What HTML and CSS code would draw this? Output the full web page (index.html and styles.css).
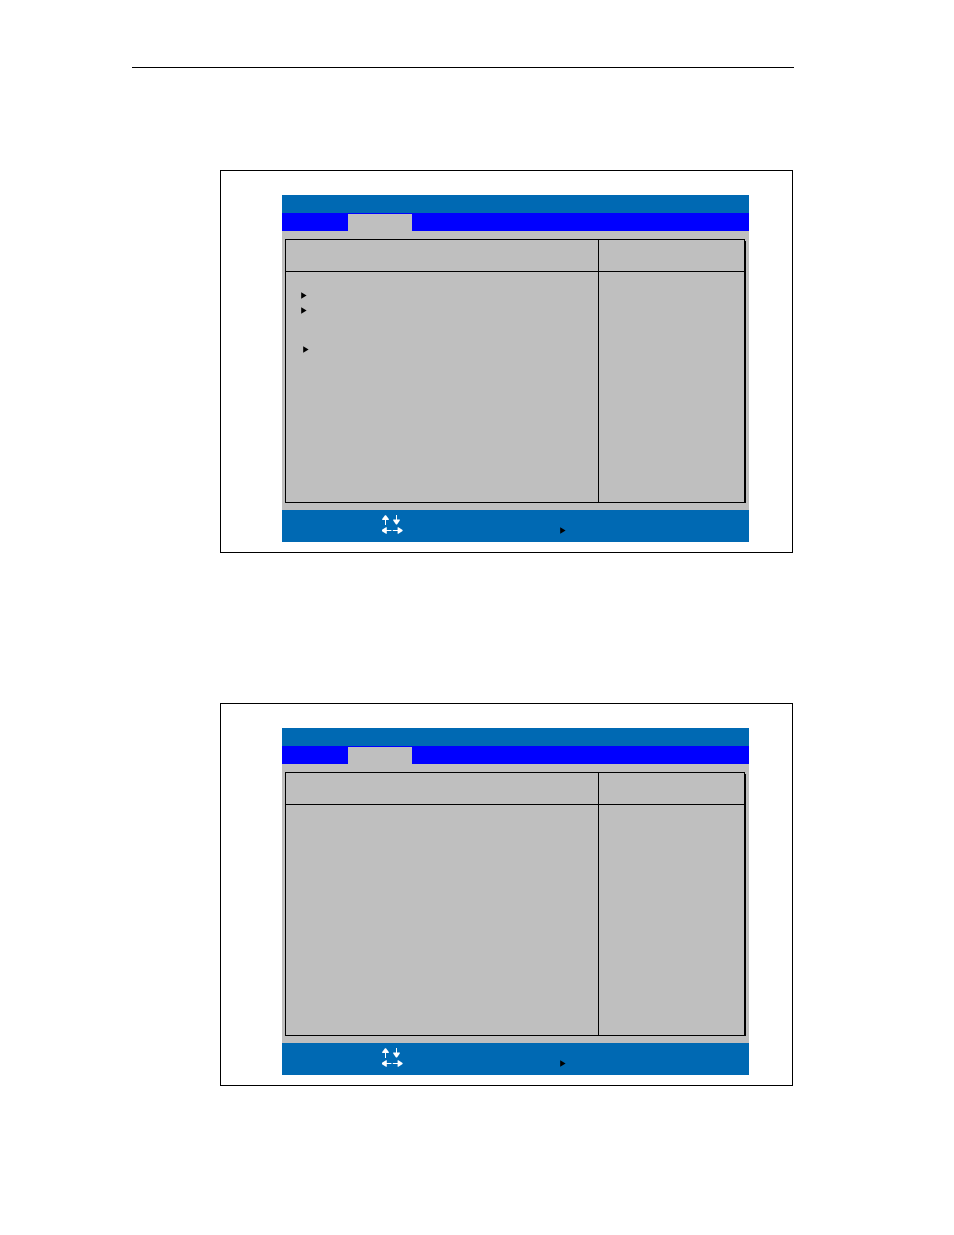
FILE: index.html
```html
<!DOCTYPE html>
<html lang="en">
<head>
<meta charset="utf-8">
<title>Setup screens</title>
<link rel="stylesheet" href="styles.css">
</head>
<body>
<svg width="0" height="0" class="symbols" aria-hidden="true">
  <symbol id="marker" viewBox="0 0 6 7"><path d="M0.2 0.2 L5.6 3.5 L0.2 6.8Z" fill="#000"/></symbol>
  <symbol id="keys" viewBox="0 0 21 19">
    <g fill="#fff">
      <path d="M3 5H0.2V4L3 0.3H4L6.8 4V5H4V10H3Z"/>
      <path d="M14 0H15V4.5H17.8V5.5L15 9.6H14L11.2 5.5V4.5H14Z"/>
      <path d="M-0.2 15L4 12.2H4.8V15H9.4V16H4.8V18.8H4L-0.2 16Z"/>
      <path d="M10.8 15H15.6V12.2H16.4L20.6 15V16L16.4 18.8H15.6V16H10.8Z"/>
    </g>
  </symbol>
</svg>
<main class="page">
  <hr class="rule">
  <figure class="figure">
    <div class="screen">
      <div class="title-bar"></div>
      <div class="menu-bar"><div class="tab"></div></div>
      <div class="screen-body">
        <div class="panel">
          <div class="cell head divided"></div>
          <div class="cell head"></div>
          <div class="cell divided options">
            <svg class="marker"><use href="#marker"/></svg>
            <svg class="marker"><use href="#marker"/></svg>
            <div class="group"><svg class="marker"><use href="#marker"/></svg></div>
          </div>
          <div class="cell"></div>
        </div>
      </div>
      <div class="key-bar">
        <svg class="keys"><use href="#keys"/></svg>
        <svg class="marker"><use href="#marker"/></svg>
      </div>
    </div>
  </figure>
  <figure class="figure">
    <div class="screen">
      <div class="title-bar"></div>
      <div class="menu-bar"><div class="tab"></div></div>
      <div class="screen-body">
        <div class="panel">
          <div class="cell head divided"></div>
          <div class="cell head"></div>
          <div class="cell divided options"></div>
          <div class="cell"></div>
        </div>
      </div>
      <div class="key-bar">
        <svg class="keys"><use href="#keys"/></svg>
        <svg class="marker"><use href="#marker"/></svg>
      </div>
    </div>
  </figure>
</main>
</body>
</html>
```
FILE: styles.css
```css
* { box-sizing: border-box; }

body {
  margin: 0;
  background: #fff;
  font-family: "Liberation Sans", Arial, sans-serif;
}

.symbols { position: absolute; }

.page { padding: 67px 160px 149px 132px; }

.rule {
  height: 1px;
  margin: 0 0 102px;
  border: 0;
  background: #000;
}

.figure {
  margin: 0 1px 150px 88px;
  padding: 24px 43px 10px 61px;
  border: 1px solid #000;
}

.figure:last-child { margin-bottom: 0; }

.screen { background: #bfbfbf; }

.title-bar {
  height: 18px;
  background: #0069b3;
}

.menu-bar {
  display: flex;
  height: 18px;
  padding: 1px 0 0 66px;
  background: #00f;
}

.tab {
  width: 64px;
  background: #bfbfbf;
}

.screen-body { padding: 8px 4px 7px 3px; }

.panel {
  display: grid;
  grid-template-columns: 313fr 145fr;
  grid-template-rows: 32px auto;
  border: 1px solid #000;
  box-shadow: 1px 1px 0 -1px #000, 2px 1px 0 -1px #000;
}

.head { border-bottom: 1px solid #000; }

.divided { border-right: 1px solid #000; }

.options {
  display: flex;
  flex-direction: column;
  gap: 8px;
  min-height: 230px;
  padding: 20px 15px;
}

.marker {
  display: block;
  width: 6px;
  height: 7px;
}

.group { padding: 24px 0 0 2px; }

.key-bar {
  display: flex;
  gap: 157px;
  height: 32px;
  padding: 5px 0 0 100px;
  background: #0069b3;
}

.keys {
  width: 21px;
  height: 19px;
  overflow: visible;
}

.key-bar .marker { margin-top: 12px; }
```
